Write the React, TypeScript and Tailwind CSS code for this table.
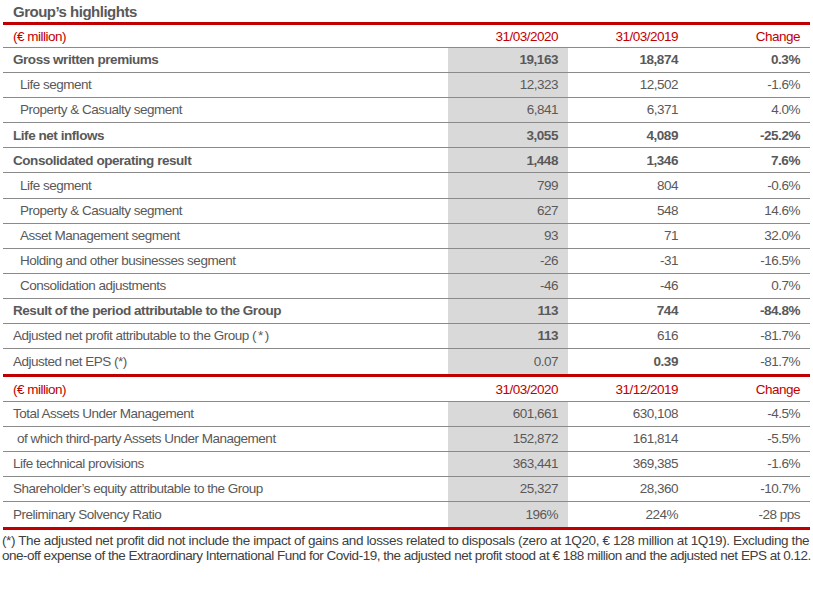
import React from "react";

type Row = {
  label: React.ReactNode;
  v: [string, string, string];
  bold?: [boolean, boolean, boolean];
  labelBold?: boolean;
  indent?: number;
};

const B: [boolean, boolean, boolean] = [true, true, true];
const N: [boolean, boolean, boolean] = [false, false, false];

const rows1: Row[] = [
  { label: "Gross written premiums", v: ["19,163", "18,874", "0.3%"], bold: B, labelBold: true },
  { label: "Life segment", v: ["12,323", "12,502", "-1.6%"], indent: 1 },
  { label: "Property & Casualty segment", v: ["6,841", "6,371", "4.0%"], indent: 1 },
  { label: "Life net inflows", v: ["3,055", "4,089", "-25.2%"], bold: B, labelBold: true },
  { label: "Consolidated operating result", v: ["1,448", "1,346", "7.6%"], bold: B, labelBold: true },
  { label: "Life segment", v: ["799", "804", "-0.6%"], indent: 1 },
  { label: "Property & Casualty segment", v: ["627", "548", "14.6%"], indent: 1 },
  { label: "Asset Management segment", v: ["93", "71", "32.0%"], indent: 1 },
  { label: "Holding and other businesses segment", v: ["-26", "-31", "-16.5%"], indent: 1 },
  { label: "Consolidation adjustments", v: ["-46", "-46", "0.7%"], indent: 1 },
  { label: "Result of the period attributable to the Group", v: ["113", "744", "-84.8%"], bold: B, labelBold: true },
  {
    label: (
      <span>
        Adjusted net profit attributable to the Group (<span className="px-[2px]">*</span>)
      </span>
    ),
    v: ["113", "616", "-81.7%"],
    bold: [true, false, false],
  },
  { label: "Adjusted net EPS (*)", v: ["0.07", "0.39", "-81.7%"], bold: [false, true, false] },
];

const rows2: Row[] = [
  { label: "Total Assets Under Management", v: ["601,661", "630,108", "-4.5%"] },
  { label: "of which third-party Assets Under Management", v: ["152,872", "161,814", "-5.5%"], indent: 2 },
  { label: "Life technical provisions", v: ["363,441", "369,385", "-1.6%"] },
  { label: "Shareholder’s equity attributable to the Group", v: ["25,327", "28,360", "-10.7%"] },
  { label: "Preliminary Solvency Ratio", v: ["196%", "224%", "-28 pps"] },
];

function Header({ d2, h }: { d2: string; h: string }) {
  return (
    <div className={"grid grid-cols-[445px_120px_120px_122px] border-b border-[#8a8a8a] text-[#c00000] items-center " + h}>
      <div className="pl-[10px] pt-[2px]">(€ million)</div>
      <div className="text-right pr-[10px] pt-[2px]">31/03/2020</div>
      <div className="text-right pr-[10px] pt-[2px]">{d2}</div>
      <div className="text-right pr-[10px] pt-[2px]">Change</div>
    </div>
  );
}

function DataRow({ r, last, h }: { r: Row; last?: boolean; h: string }) {
  const b = r.bold ?? N;
  const pl = r.indent === 1 ? "pl-[17px]" : r.indent === 2 ? "pl-[14px]" : "pl-[10px]";
  const bold = " font-bold tracking-[-0.45px]";
  return (
    <div
      className={
        "grid grid-cols-[445px_120px_120px_122px] " +
        h +
        (last ? "" : " border-b border-[#8a8a8a]")
      }
    >
      <div className={"flex items-center " + pl + (r.labelBold ? bold : "")}>{r.label}</div>
      <div className={"flex items-center justify-end pr-[10px] bg-[#d9d9d9]" + (b[0] ? bold : "")}>{r.v[0]}</div>
      <div className={"flex items-center justify-end pr-[10px]" + (b[1] ? bold : "")}>{r.v[1]}</div>
      <div className={"flex items-center justify-end pr-[10px]" + (b[2] ? bold : "")}>{r.v[2]}</div>
    </div>
  );
}

export default function App() {
  return (
    <div className="w-[813px] h-[590px] bg-white font-['Liberation_Sans',Arial,sans-serif] text-[#595959] text-[13.5px] tracking-[-0.5px] leading-none">
      <div className="h-[22px] pl-[13px] pt-[4px] text-[15px] font-bold tracking-[-0.5px]">Group’s highlights</div>
      <div className="ml-[3px] w-[807px]">
        <div className="border-t-[3px] border-[#c00000]">
          <Header d2="31/03/2019" h="h-[23px]" />
          {rows1.map((r, i) => (
            <DataRow key={i} r={r} last={i === rows1.length - 1} h="h-[25.1px]" />
          ))}
        </div>
        <div className="border-t-[3px] border-b-[3px] border-[#c00000]">
          <Header d2="31/12/2019" h="h-[25px]" />
          {rows2.map((r, i) => (
            <DataRow key={i} r={r} last={i === rows2.length - 1} h="h-[25px]" />
          ))}
        </div>
      </div>
      <div className="pl-[2px] pt-[3px] text-[13.5px] leading-[15px] text-[#404040] whitespace-nowrap">
        <div className="tracking-[-0.375px]">
          (*) The adjusted net profit did not include the impact of gains and losses related to disposals (zero at 1Q20, € 128 million at 1Q19). Excluding the
        </div>
        <div className="tracking-[-0.49px]">
          one-off expense of the Extraordinary International Fund for Covid-19, the adjusted net profit stood at € 188 million and the adjusted net EPS at 0.12.
        </div>
      </div>
    </div>
  );
}
